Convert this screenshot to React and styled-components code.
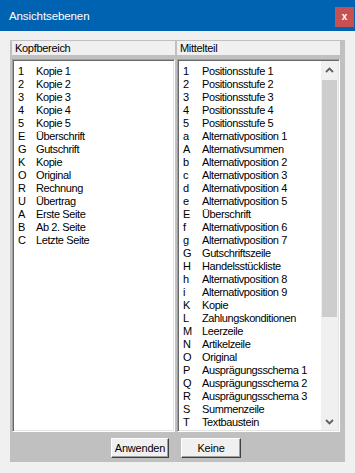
import React from 'react';
import styled, { createGlobalStyle } from 'styled-components';

const Global = createGlobalStyle`
  html, body { margin: 0; padding: 0; background: #f0f0f0; }
  body { width: 355px; height: 473px; overflow: hidden; font-family: "Liberation Sans", Arial, sans-serif; }
  * { box-sizing: border-box; }
`;

const Window = styled.div`
  width: 355px;
  height: 473px;
  display: flex;
  flex-direction: column;
  background: #f0f0f0;
`;

const TitleBar = styled.div`
  height: 31px;
  flex: none;
  background: #0063b1;
  display: flex;
  align-items: center;
  justify-content: space-between;
  padding: 0 1px 0 9px;
`;

const Title = styled.span`
  color: #fff;
  font-size: 11.5px;
  letter-spacing: -0.1px;
`;

const CloseBtn = styled.div`
  width: 19px;
  height: 20px;
  margin-top: 3px;
  background: #c75050;
  color: #fff;
  display: flex;
  align-items: center;
  justify-content: center;
  font: bold 10px "Liberation Sans", Arial, sans-serif;
  line-height: 1;
  padding-bottom: 1px;
`;

const Body = styled.div`
  flex: 1;
  min-height: 0;
  padding: 9px 10px 11px 10px;
  display: flex;
`;

const Panel = styled.div`
  flex: 1;
  min-height: 0;
  background: #c0c0c0;
  display: grid;
  grid-template-columns: 1fr 1fr;
  grid-template-rows: auto minmax(0, 1fr) auto;
  column-gap: 2px;
  row-gap: 4px;
  padding: 1px 5px 0 2px;
`;

const Header = styled.div`
  height: 14px;
  background: #f0f0f0;
  font-size: 11px;
  letter-spacing: -0.3px;
  line-height: 14px;
  padding-left: 3px;
  color: #000;
`;

const ListBox = styled.div`
  background: #fff;
  border: 1px solid;
  border-color: #a0a0a0 #ffffff #ffffff #a0a0a0;
  box-shadow: inset 1px 1px 0 #696969, inset -1px -1px 0 #e3e3e3;
  display: flex;
  min-height: 0;
  overflow: hidden;
`;

const Rows = styled.div`
  flex: 1;
  padding: 5px 0 0 5px;
  overflow: hidden;
`;

const Row = styled.div`
  display: grid;
  grid-template-columns: ${p => (p.$wide ? 19 : 18)}px 1fr;
  height: 13px;
  line-height: 13px;
  font-size: 11px;
  letter-spacing: -0.4px;
  color: #000;
  white-space: nowrap;
`;

const ScrollBar = styled.div`
  width: 17px;
  flex: none;
  margin: 1px 1px 1px 0;
  background: #f0f0f0;
  display: flex;
  flex-direction: column;
`;

const Arrow = styled.div`
  height: 17px;
  flex: none;
  display: flex;
  align-items: center;
  justify-content: center;
`;

const Track = styled.div`
  flex: 1;
  padding: 2px 1px 0 1px;
`;

const Thumb = styled.div`
  height: 237px;
  background: #cdcdcd;
`;

const ButtonRow = styled.div`
  grid-column: 1 / -1;
  display: flex;
  justify-content: center;
  gap: 12px;
  padding: 2px 0 4px 0;
`;

const Button = styled.button`
  width: ${p => p.$w}px;
  height: 20px;
  padding: 0;
  margin: 0;
  background: #f0f0f0;
  border: 1px solid;
  border-color: #ffffff #404040 #404040 #ffffff;
  box-shadow: inset -1px -1px 0 #a0a0a0;
  font: 11px "Liberation Sans", Arial, sans-serif;
  letter-spacing: -0.2px;
  color: #000;
`;

const Chevron = ({ down }) => (
  <svg width="9" height="6" viewBox="0 0 9 6">
    <polyline
      points={down ? '1,1 4.5,4.5 8,1' : '1,5 4.5,1.5 8,5'}
      fill="none"
      stroke="#606060"
      strokeWidth="1.8"
    />
  </svg>
);

const kopf = [
  ['1', 'Kopie 1'], ['2', 'Kopie 2'], ['3', 'Kopie 3'], ['4', 'Kopie 4'], ['5', 'Kopie 5'],
  ['E', 'Überschrift'], ['G', 'Gutschrift'], ['K', 'Kopie'], ['O', 'Original'],
  ['R', 'Rechnung'], ['U', 'Übertrag'], ['A', 'Erste Seite'], ['B', 'Ab 2. Seite'], ['C', 'Letzte Seite'],
];

const mittel = [
  ['1', 'Positionsstufe 1'], ['2', 'Positionsstufe 2'], ['3', 'Positionsstufe 3'],
  ['4', 'Positionsstufe 4'], ['5', 'Positionsstufe 5'], ['a', 'Alternativposition 1'],
  ['A', 'Alternativsummen'], ['b', 'Alternativposition 2'], ['c', 'Alternativposition 3'],
  ['d', 'Alternativposition 4'], ['e', 'Alternativposition 5'], ['E', 'Überschrift'],
  ['f', 'Alternativposition 6'], ['g', 'Alternativposition 7'], ['G', 'Gutschriftszeile'],
  ['H', 'Handelsstückliste'], ['h', 'Alternativposition 8'], ['i', 'Alternativposition 9'],
  ['K', 'Kopie'], ['L', 'Zahlungskonditionen'], ['M', 'Leerzeile'], ['N', 'Artikelzeile'],
  ['O', 'Original'], ['P', 'Ausprägungsschema 1'], ['Q', 'Ausprägungsschema 2'],
  ['R', 'Ausprägungsschema 3'], ['S', 'Summenzeile'], ['T', 'Textbaustein'],
];

export default function App() {
  return (
    <>
      <Global />
      <Window>
        <TitleBar>
          <Title>Ansichtsebenen</Title>
          <CloseBtn>x</CloseBtn>
        </TitleBar>
        <Body>
          <Panel>
            <Header>Kopfbereich</Header>
            <Header>Mittelteil</Header>
            <ListBox>
              <Rows>
                {kopf.map(([k, t]) => (
                  <Row key={k + t}><span>{k}</span><span>{t}</span></Row>
                ))}
              </Rows>
            </ListBox>
            <ListBox>
              <Rows>
                {mittel.map(([k, t]) => (
                  <Row key={k + t} $wide><span>{k}</span><span>{t}</span></Row>
                ))}
              </Rows>
              <ScrollBar>
                <Arrow><Chevron /></Arrow>
                <Track><Thumb /></Track>
                <Arrow><Chevron down /></Arrow>
              </ScrollBar>
            </ListBox>
            <ButtonRow>
              <Button $w={58}>Anwenden</Button>
              <Button $w={60}>Keine</Button>
            </ButtonRow>
          </Panel>
        </Body>
      </Window>
    </>
  );
}
